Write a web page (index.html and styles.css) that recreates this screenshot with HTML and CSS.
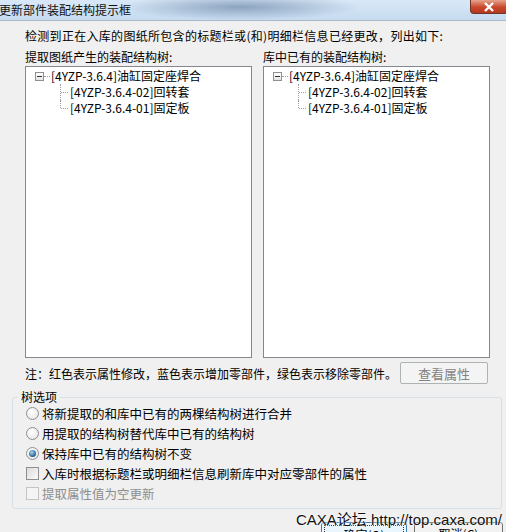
FILE: index.html
```html
<!DOCTYPE html>
<html lang="zh-CN">
<head>
  <meta charset="UTF-8" />
  <title>更新部件装配结构提示框</title>
  <link rel="stylesheet" href="styles.css">
</head>
<body>
  <div class="window">
    <div class="titlebar">
      <span class="title">更新部件装配结构提示框</span>
      <div class="close">
        <svg width="14" height="10" viewBox="0 0 14 10"><path d="M3 1 L11 9 M11 1 L3 9" stroke="#fff" stroke-width="2.4"/></svg>
      </div>
    </div>

    <div class="intro">检测到正在入库的图纸所包含的标题栏或(和)明细栏信息已经更改，列出如下:</div>

    <div class="panes">
      <div class="pane">
        <div class="pane-label">提取图纸产生的装配结构树:</div>
        <div class="tree">
          <div class="node root"><span class="toggle"></span><span class="dots"></span>[4YZP-3.6.4]油缸固定座焊合</div>
          <div class="children">
            <div class="node child"><span class="branch"></span>[4YZP-3.6.4-02]回转套</div>
            <div class="node child last"><span class="branch"></span>[4YZP-3.6.4-01]固定板</div>
          </div>
        </div>
      </div>
      <div class="pane">
        <div class="pane-label">库中已有的装配结构树:</div>
        <div class="tree">
          <div class="node root"><span class="toggle"></span><span class="dots"></span>[4YZP-3.6.4]油缸固定座焊合</div>
          <div class="children">
            <div class="node child"><span class="branch"></span>[4YZP-3.6.4-02]回转套</div>
            <div class="node child last"><span class="branch"></span>[4YZP-3.6.4-01]固定板</div>
          </div>
        </div>
      </div>
    </div>

    <div class="note-row">
      <span class="note">注：红色表示属性修改，蓝色表示增加零部件，绿色表示移除零部件。</span>
      <button class="btn disabled">查看属性</button>
    </div>

    <div class="group">
      <span class="group-label">树选项</span>
      <label class="opt"><span class="radio"></span>将新提取的和库中已有的两棵结构树进行合并</label>
      <label class="opt"><span class="radio"></span>用提取的结构树替代库中已有的结构树</label>
      <label class="opt"><span class="radio checked"></span>保持库中已有的结构树不变</label>
      <label class="opt"><span class="check"></span>入库时根据标题栏或明细栏信息刷新库中对应零部件的属性</label>
      <label class="opt dim"><span class="check"></span>提取属性值为空更新</label>
    </div>

    <div class="footer">
      <button class="btn default"><span>确定(O)</span></button>
      <button class="btn">取消(C)</button>
      <span class="watermark">CAXA论坛 http://top.caxa.com/</span>
    </div>
  </div>
</body>
</html>
```

FILE: styles.css
```css
body {
  margin: 0;
  background: #f0f0f0;
  font-family: "Noto Sans CJK SC", "Liberation Sans", sans-serif;
  font-size: 12px;
  color: #000;
}

.window {
  width: 506px;
  height: 532px;
  overflow: hidden;
  position: relative;
}

.titlebar {
  height: 21px;
  display: flex;
  align-items: center;
  justify-content: space-between;
  background:
    radial-gradient(ellipse 120px 13px at 240px 7px, rgba(70,100,140,0.5), rgba(70,100,140,0) 100%),
    linear-gradient(to bottom, #d9e8f7, #c6dbf0);
  border-bottom: 1px solid #a8b8c8;
  box-sizing: border-box;
}

.title {
  margin-left: -1px;
  line-height: 20px;
  color: #111;
}

.close {
  width: 38px;
  height: 14px;
  align-self: flex-start;
  margin-right: -2px;
  background: linear-gradient(to bottom, #e6a48e, #c9482c 55%, #b33820);
  border: 1px solid #6e3424;
  border-top: none;
  border-radius: 0 0 4px 4px;
  display: flex;
  align-items: center;
  justify-content: center;
  box-sizing: border-box;
}

.intro {
  margin: 7px 0 0 25px;
  line-height: 16px;
  letter-spacing: 0.3px;
}

.panes {
  display: grid;
  grid-template-columns: 227px 227px;
  column-gap: 11px;
  padding-left: 25px;
  margin-top: 5px;
}

.pane-label {
  line-height: 16px;
  height: 16px;
  margin-bottom: 1px;
}

.tree {
  height: 292px;
  box-sizing: border-box;
  background: #fff;
  border: 1px solid #828790;
  padding: 1px 0 0 9px;
}

.node {
  height: 16px;
  line-height: 16px;
  display: flex;
  align-items: center;
  white-space: nowrap;
}

.toggle {
  width: 7px;
  height: 7px;
  border: 1px solid #8e8f8f;
  background: linear-gradient(to bottom, #fff, #e4e4e4);
  position: relative;
  flex: none;
}

.toggle::after {
  content: "";
  position: absolute;
  left: 1px;
  top: 3px;
  width: 5px;
  height: 1px;
  background: #333;
}

.dots {
  width: 6px;
  margin-right: 1px;
  border-top: 1px dotted #a0a0a0;
}

.children {
  margin-left: 25px;
}

.branch {
  width: 8px;
  height: 16px;
  margin-right: 2px;
  position: relative;
  flex: none;
}

.branch::before {
  content: "";
  position: absolute;
  left: 0;
  top: 0;
  height: 16px;
  border-left: 1px dotted #a0a0a0;
}

.last .branch::before {
  height: 8px;
}

.branch::after {
  content: "";
  position: absolute;
  left: 1px;
  top: 8px;
  width: 7px;
  border-top: 1px dotted #a0a0a0;
}

.note-row {
  display: flex;
  align-items: center;
  padding: 0 18px 0 25px;
  margin-top: 4px;
  height: 22px;
}

.note {
  flex: 1;
}

.btn {
  font-family: inherit;
  font-size: 12px;
  height: 23px;
  padding: 0;
  border: 1px solid #707070;
  border-radius: 3px;
  background: linear-gradient(to bottom, #f2f2f2 50%, #dddddd 50%, #cfcfcf);
  color: #000;
}

.btn.disabled {
  width: 88px;
  height: 22px;
  border-color: #adb2b5;
  background: #f4f4f4;
  color: #838383;
  border-radius: 2px;
  font-size: 13px;
}

.group {
  position: relative;
  margin: 13px 4px 0 12px;
  height: 112px;
  box-sizing: border-box;
  border: 1px solid #d5dfe5;
  border-radius: 3px;
  padding: 5px 0 0 13px;
}

.group-label {
  position: absolute;
  left: 5px;
  top: -9px;
  padding: 0 3px;
  background: #f0f0f0;
  line-height: 16px;
}

.opt {
  display: flex;
  align-items: center;
  height: 20px;
  gap: 3px;
  font-size: 12.5px;
}

.opt.dim {
  color: #8d8d8d;
}

.radio {
  width: 11px;
  height: 11px;
  border: 1px solid #8f8f8f;
  border-radius: 50%;
  background: radial-gradient(circle at 40% 35%, #fff, #e2e2e2);
  position: relative;
}

.radio.checked::after {
  content: "";
  position: absolute;
  left: 2px;
  top: 2px;
  width: 7px;
  height: 7px;
  border-radius: 50%;
  background: radial-gradient(circle at 40% 35%, #a9d6f3, #1f5e8f 70%, #0f3f66);
}

.check {
  width: 11px;
  height: 11px;
  border: 1px solid #8f8f8f;
  background: linear-gradient(135deg, #dcdcdc, #fafafa);
}

.dim .check {
  border-color: #c4c4c4;
  background: #f4f4f4;
}

.footer {
  display: flex;
  padding-left: 321px;
  gap: 7px;
  margin-top: 13px;
}

.footer .btn {
  width: 89px;
}

.footer .btn.default {
  width: 86px;
  border-color: #3c7fb1;
  background: linear-gradient(to bottom, #eaf6fd 50%, #bee6fd 50%, #a7d9f5);
  padding: 2px;
}

.footer .btn.default span {
  display: block;
  height: 100%;
  border: 1px dotted #333;
  box-sizing: border-box;
}

.watermark {
  position: absolute;
  left: 296px;
  bottom: 4px;
  font-family: "Liberation Sans", "Noto Sans CJK SC", sans-serif;
  font-size: 15px;
  line-height: 17px;
  color: #111;
  text-shadow: 0 0 2px #fff, 0 0 2px #fff;
}
```
